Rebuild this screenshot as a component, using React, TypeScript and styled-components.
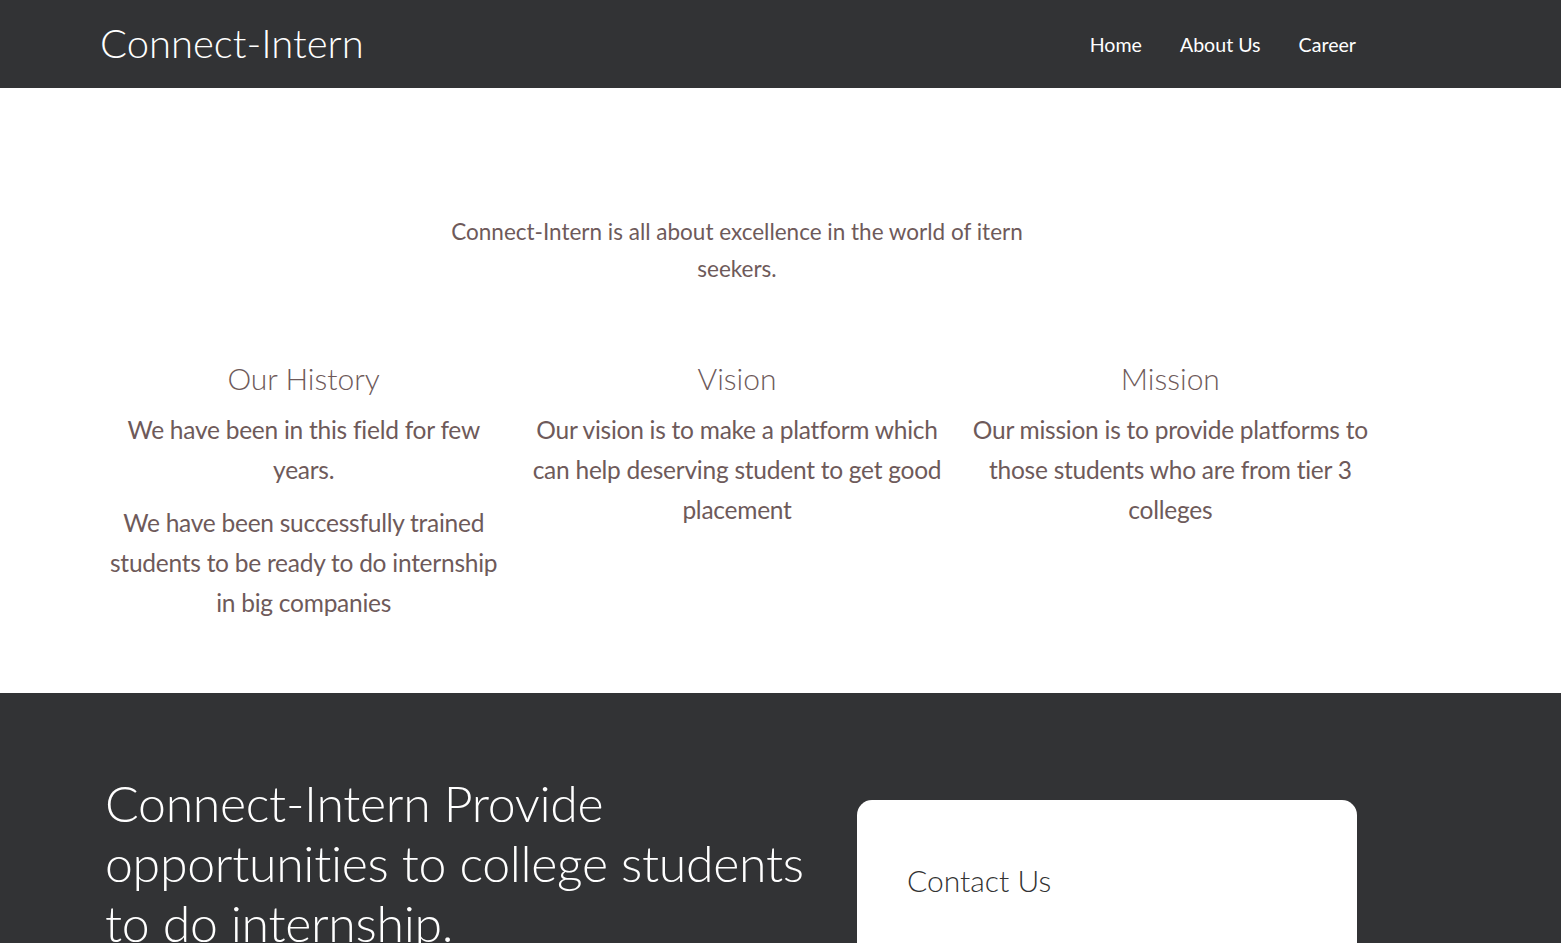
import React from "react";
import styled, { createGlobalStyle } from "styled-components";

const Global = createGlobalStyle`
  html, body { margin: 0; padding: 0; background: #ffffff; }
  body { font-family: Lato, "Open Sans", sans-serif; overflow: hidden; }
  * { box-sizing: border-box; }
`;

const Dark = "#323335";
const TextBrown = "#6e5a5a";

const NavBar = styled.header`
  background: ${Dark};
  height: 88px;
  display: flex;
  align-items: center;
  justify-content: space-between;
  padding: 0 205px 0 100px;
`;

const Brand = styled.a`
  font-family: Lato, sans-serif;
  font-weight: 300;
  font-size: 40px;
  color: #ffffff;
  text-decoration: none;
  line-height: 1;
  margin-top: -2px;
`;

const NavList = styled.nav`
  display: flex;
  align-items: center;
  gap: 38px;
`;

const NavLink = styled.a`
  font-family: Lato, sans-serif;
  font-size: 19.6px;
  font-weight: 400;
  color: #ffffff;
  text-decoration: none;
`;

const AboutSection = styled.section`
  padding: 125px 0 70px 87px;
`;

const Inner = styled.div`
  width: 1300px;
  display: flex;
  flex-direction: column;
  align-items: center;
`;

const Intro = styled.p`
  margin: 0;
  max-width: 600px;
  text-align: center;
  font-size: 22.5px;
  line-height: 37px;
  color: ${TextBrown};
`;

const Columns = styled.div`
  margin-top: 75px;
  width: 100%;
  display: grid;
  grid-template-columns: repeat(3, 1fr);
`;

const Column = styled.div`
  padding: 0 12px;
  text-align: center;
`;

const ColTitle = styled.h3`
  margin: 0 0 16px;
  font-weight: 300;
  font-size: 30px;
  line-height: 32px;
  color: ${TextBrown};
`;

const ColText = styled.p`
  margin: 0 0 13px;
  font-size: 24.5px;
  line-height: 40px;
  color: ${TextBrown};
  letter-spacing: -0.25px;
  &:last-child { margin-bottom: 0; }
`;

const Footer = styled.section`
  background: ${Dark};
  height: 250px;
  display: flex;
  justify-content: space-between;
  align-items: flex-start;
  padding: 80px 204px 0 105px;
`;

const Tagline = styled.h2`
  margin: 0;
  width: 720px;
  font-weight: 300;
  font-size: 50px;
  line-height: 60px;
  color: #ffffff;
  letter-spacing: -0.3px;
`;

const Card = styled.div`
  margin-top: 27px;
  width: 500px;
  height: 300px;
  background: #ffffff;
  border-radius: 15px;
  padding: 62px 50px;
`;

const CardTitle = styled.h3`
  margin: 0;
  font-weight: 300;
  font-size: 30px;
  line-height: 36px;
  color: #333333;
`;

const columns = [
  {
    title: "Our History",
    texts: [
      "We have been in this field for few years.",
      "We have been successfully trained students to be ready to do internship in big companies",
    ],
  },
  {
    title: "Vision",
    texts: ["Our vision is to make a platform which can help deserving student to get good placement"],
  },
  {
    title: "Mission",
    texts: ["Our mission is to provide platforms to those students who are from tier 3 colleges"],
  },
];

export default function App() {
  return (
    <>
      <Global />
      <NavBar>
        <Brand href="#">Connect-Intern</Brand>
        <NavList>
          <NavLink href="#">Home</NavLink>
          <NavLink href="#">About Us</NavLink>
          <NavLink href="#">Career</NavLink>
        </NavList>
      </NavBar>
      <AboutSection>
        <Inner>
          <Intro>Connect-Intern is all about excellence in the world of itern seekers.</Intro>
          <Columns>
            {columns.map((c) => (
              <Column key={c.title}>
                <ColTitle>{c.title}</ColTitle>
                {c.texts.map((t) => (
                  <ColText key={t}>{t}</ColText>
                ))}
              </Column>
            ))}
          </Columns>
        </Inner>
      </AboutSection>
      <Footer>
        <Tagline>Connect-Intern Provide opportunities to college students to do internship.</Tagline>
        <Card>
          <CardTitle>Contact Us</CardTitle>
        </Card>
      </Footer>
    </>
  );
}
